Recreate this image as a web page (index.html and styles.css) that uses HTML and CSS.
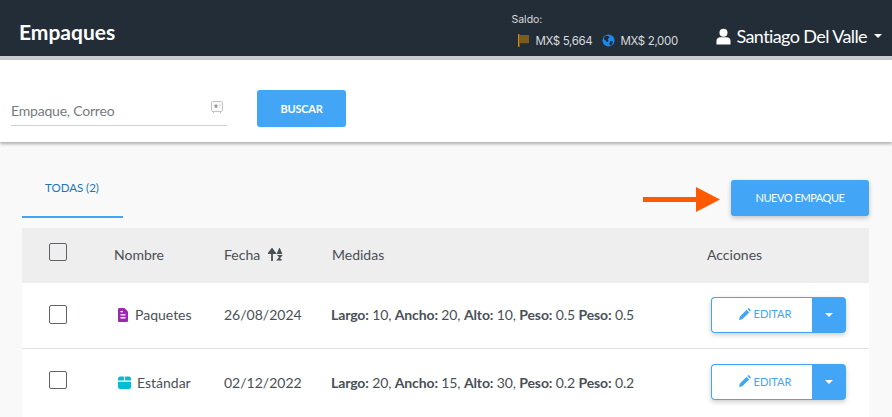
FILE: index.html
```html
<!DOCTYPE html>
<html lang="es">
<head>
<meta charset="utf-8">
<title>Empaques</title>
<link rel="stylesheet" href="styles.css">
</head>
<body>
<header class="topbar">
  <h1 class="title">Empaques</h1>
  <div class="balance">
    <div class="balance-label">Saldo:</div>
    <div class="balance-values">
      <svg class="flag" viewBox="0 0 12 14" width="11" height="13"><rect x="0" y="0" width="1.6" height="14" fill="#d98a10"/><path d="M1.6 1H12V10H1.6Z" fill="#7d5a1f"/></svg>
      <span class="amount">MX$ 5,664</span>
      <svg class="globe" viewBox="0 0 14 14" width="13" height="13"><circle cx="7" cy="7" r="6.5" fill="#1e88e5"/><path d="M3 2.5 6.5 2 8 4 6 5.5 7 7.5 5.5 9 4 7 2 5.5ZM9 7.5 12 8 10.5 11.5 8.5 12.5 8 10Z" fill="#1c2a38"/></svg>
      <span class="amount">MX$ 2,000</span>
    </div>
  </div>
  <div class="user">
    <svg viewBox="0 0 16 17" width="15" height="17"><circle cx="8" cy="4.4" r="4.3" fill="#fff"/><path d="M0.5 17V13.2C0.5 10.8 2.4 9.4 4.4 9.4H11.6C13.6 9.4 15.5 10.8 15.5 13.2V17Z" fill="#fff"/></svg>
    <span class="user-name">Santiago Del Valle</span>
    <span class="caret caret-white"></span>
  </div>
</header>

<section class="search-panel">
  <div class="search-field">
    <span class="search-placeholder">Empaque, Correo</span>
    <svg class="search-icon" viewBox="0 0 12 13" width="12" height="13"><path d="M1.5 0.6H10.5Q11.4 0.6 11.4 1.5V9.5Q11.4 10.4 10.5 10.4H1.5Q0.6 10.4 0.6 9.5V1.5Q0.6 0.6 1.5 0.6ZM2.5 10.4V12M9.5 10.4V12" fill="none" stroke="#bdbdbd" stroke-width="1"/><path d="M5 3 5.5 4.4H7L5.8 5.3 6.2 6.8 5 5.9 3.8 6.8 4.2 5.3 3 4.4H4.5ZM9 3V5.5M9 6.5V7.3" fill="#8c8c8c" stroke="#8c8c8c" stroke-width=".4"/></svg>
  </div>
  <button class="btn-search">BUSCAR</button>
</section>

<main class="content">
  <div class="toolbar">
    <div class="tab">TODAS (2)</div>
    <div class="toolbar-actions">
      <svg class="arrow" viewBox="0 0 77 25" width="77" height="25"><rect x="0" y="10" width="54" height="5" fill="#ff5a00"/><path d="M53 0 77 12.5 53 25Z" fill="#ff5a00"/></svg>
      <button class="btn-new">NUEVO EMPAQUE</button>
    </div>
  </div>

  <div class="table">
    <div class="row row-head">
      <span class="check check-head"></span>
      <span>Nombre</span>
      <span class="sort-cell">Fecha
        <svg viewBox="0 0 15 13" width="15" height="13"><path d="M4 13V3.5M1 5 4 1 7 5Z" fill="#4a4f57" stroke="#4a4f57" stroke-width="1.8"/><path d="M9.5 5.5 11.5 0.8 13.5 5.5ZM9.5 7.5H13.5L9.5 12H13.8" fill="#4a4f57" stroke="#4a4f57" stroke-width="1.2"/></svg>
      </span>
      <span>Medidas</span>
      <span class="head-actions">Acciones</span>
    </div>

    <div class="row row-one">
      <span class="check"></span>
      <span class="name">
        <svg viewBox="0 0 10 14" width="10" height="14"><path d="M1.2 0H6.5L10 3.5V12.8Q10 14 8.8 14H1.2Q0 14 0 12.8V1.2Q0 0 1.2 0Z" fill="#9c27b0"/><path d="M2.5 6.2H7.5V7.4H2.5ZM2.5 9H7.5V10.6H2.5ZM2.5 3H5V4.2H2.5Z" fill="#fff"/></svg>
        Paquetes
      </span>
      <span>26/08/2024</span>
      <span class="measures"><b>Largo:</b> 10, <b>Ancho:</b> 20, <b>Alto:</b> 10, <b>Peso:</b> 0.5 <b>Peso:</b> 0.5</span>
      <div class="split">
        <button class="btn-edit"><svg viewBox="0 0 12 12" width="12" height="12"><path d="M0 12 0.7 8.7 7.6 1.8 10.2 4.4 3.3 11.3ZM8.4 1 9.2 0.3Q9.6 0 10 0.3L11.7 2Q12 2.4 11.7 2.8L11 3.6Z" fill="#42a5f5"/></svg>EDITAR</button>
        <button class="btn-more"><span class="caret"></span></button>
      </div>
    </div>

    <div class="row row-two">
      <span class="check"></span>
      <span class="name name-wide">
        <svg viewBox="0 0 13 13" width="13" height="13"><path d="M0 4.6H5.9V0.4H2.2Q0.3 0.4 0 2.4ZM7.1 0.4V4.6H13V2.4Q12.7 0.4 10.8 0.4ZM0 5.8H13V11Q13 13 11 13H2Q0 13 0 11Z" fill="#00bcd4"/></svg>
        Estándar
      </span>
      <span>02/12/2022</span>
      <span class="measures"><b>Largo:</b> 20, <b>Ancho:</b> 15, <b>Alto:</b> 30, <b>Peso:</b> 0.2 <b>Peso:</b> 0.2</span>
      <div class="split">
        <button class="btn-edit"><svg viewBox="0 0 12 12" width="12" height="12"><path d="M0 12 0.7 8.7 7.6 1.8 10.2 4.4 3.3 11.3ZM8.4 1 9.2 0.3Q9.6 0 10 0.3L11.7 2Q12 2.4 11.7 2.8L11 3.6Z" fill="#42a5f5"/></svg>EDITAR</button>
        <button class="btn-more"><span class="caret"></span></button>
      </div>
    </div>
  </div>
</main>
</body>
</html>
```
FILE: styles.css
```css
* { box-sizing: border-box; }
html, body { margin: 0; padding: 0; }
body {
  width: 892px;
  height: 417px;
  overflow: hidden;
  background: #f9f9f9;
  font-family: Lato, "Liberation Sans", sans-serif;
  color: #4a4f57;
  font-size: 14px;
}
button { font-family: inherit; cursor: pointer; }

.topbar {
  height: 60px;
  padding: 0 10px 0 19px;
  background: #222d38;
  border-bottom: 4px solid #c9cacd;
  display: flex;
  align-items: center;
}
.title {
  margin: 6px 0 0;
  font-size: 21px;
  font-weight: 700;
  color: #fff;
  flex: 1;
}
.balance { width: 205px; margin-top: 2px; color: #d8dadc; }
.balance-label { font-size: 10.5px; line-height: 12px; font-family: Inter, Lato, sans-serif; margin: 3px 0 8px; }
.balance-values { display: flex; align-items: center; padding-left: 7px; font-size: 11.5px; line-height: 14px; font-family: Inter, Lato, sans-serif; }
.flag { margin: 0 6px 0 0; }
.amount { letter-spacing: -0.35px; }
.globe { margin: 0 5px 0 10px; }
.user { display: flex; align-items: center; margin-top: 16px; color: #fff; }
.user-name { font-size: 18px; margin: 0 7px 0 5px; letter-spacing: -0.6px; }
.caret {
  display: inline-block;
  width: 0; height: 0;
  border-left: 4px solid transparent;
  border-right: 4px solid transparent;
  border-top: 4px solid #fff;
}

.search-panel {
  height: 82px;
  background: #fff;
  box-shadow: 0 2px 3px rgba(0,0,0,.3);
  padding: 30px 0 0 11px;
  display: flex;
  align-items: flex-start;
  position: relative;
}
.search-field {
  width: 216px;
  height: 36px;
  margin-right: 30px;
  border-bottom: 1px solid #cfcfcf;
  display: flex;
  justify-content: space-between;
}
.search-placeholder { padding-top: 12px; font-size: 14px; line-height: 17px; letter-spacing: -0.2px; color: #777b80; }
.search-icon { margin: 11px 4px 0 0; }
.btn-search {
  width: 89px;
  height: 37px;
  border: 0;
  border-radius: 3px;
  background: #42a5f5;
  color: #fff;
  font-size: 11px;
  font-weight: 700;
  letter-spacing: -0.2px;
}

.content { padding: 0 23px 0 22px; }
.toolbar {
  height: 86px;
  display: flex;
  justify-content: space-between;
  align-items: flex-start;
}
.tab {
  width: 101px;
  height: 76px;
  padding: 39px 0 0 23px;
  border-bottom: 2px solid #42a5f5;
  color: #1976b8;
  font-size: 11.5px;
  line-height: 14px;
}
.toolbar-actions { display: flex; align-items: flex-start; padding-top: 38px; }
.arrow { margin: 7px 11px 0 0; }
.btn-new {
  width: 138px;
  height: 36px;
  padding: 0 0 2px;
  border: 0;
  border-radius: 3px;
  background: #42a5f5;
  color: #fff;
  font-size: 11px;
  letter-spacing: -0.45px;
  box-shadow: 0 2px 5px rgba(0,0,0,.22);
}

.table { background: #fff; }
.row {
  display: grid;
  grid-template-columns: 92px 110px 108px 375px 1fr;
  align-items: center;
  padding-bottom: 2px;
  font-size: 14px;
}
.row > :first-child { margin-left: 27px; }
.row-head { height: 55px; background: #eeeeee; }
.row-one { height: 66px; border-bottom: 1px solid #e1e1ea; }
.row-two { height: 68px; }
.check {
  width: 18px;
  height: 18px;
  border: 1px solid #5f6268;
  border-radius: 2px;
  background: transparent;
}
.check-head { margin-top: -6px; }
.row-one .check { margin-top: -1px; height: 19px; }
.row-two .check { margin-top: -4px; }
.sort-cell { display: flex; align-items: center; gap: 8px; }
.name { display: flex; align-items: center; gap: 7px; padding-left: 4px; }
.name-wide { gap: 6px; }
.measures { margin-left: -1px; font-size: 14px; letter-spacing: -0.12px; color: #4a4f57; }
.measures b { font-weight: 700; }
.split {
  display: flex;
  width: 135px;
  height: 36px;
  margin-left: 4px;
  border-radius: 4px;
  box-shadow: 0 2px 5px rgba(0,0,0,.2);
}
.btn-edit {
  width: 101px;
  border: 1px solid #42a5f5;
  border-right: 0;
  border-radius: 4px 0 0 4px;
  background: #fff;
  color: #42a5f5;
  font-size: 11px;
  padding: 0 0 2px 6px;
  display: flex;
  align-items: center;
  justify-content: center;
  gap: 3px;
}
.btn-more {
  flex: 1;
  border: 0;
  border-radius: 0 4px 4px 0;
  background: #42a5f5;
  padding: 0;
  display: flex;
  align-items: center;
  justify-content: center;
}
```
